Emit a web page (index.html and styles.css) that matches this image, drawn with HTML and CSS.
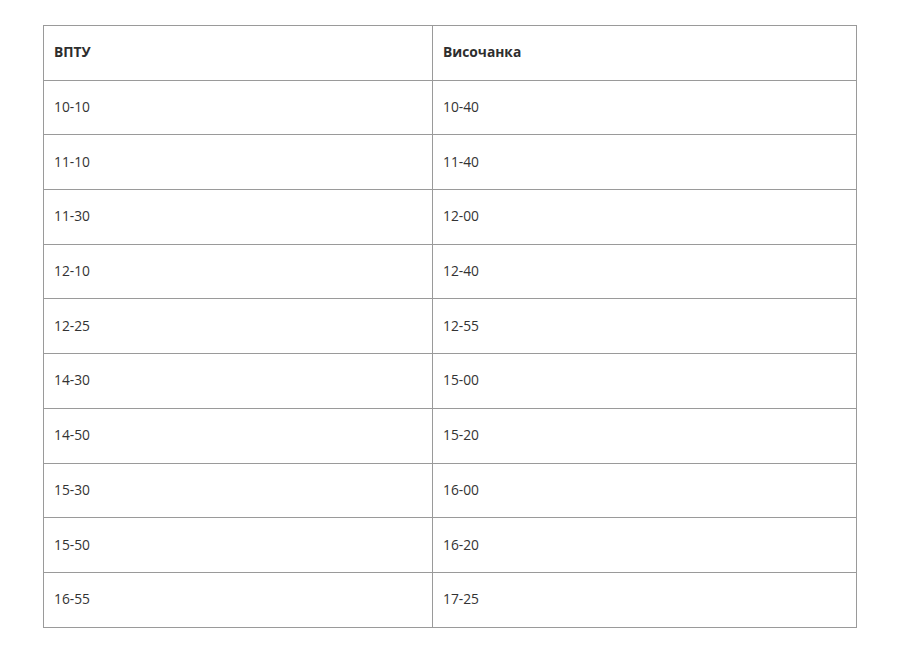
FILE: index.html
```html
<!DOCTYPE html>
<html lang="uk">
<head>
<meta charset="utf-8">
<link rel="stylesheet" href="styles.css">
</head>
<body>
<div class="wrap">
<table class="schedule">
<colgroup><col class="c1"><col class="c2"></colgroup>
<thead>
<tr><th>ВПТУ</th><th>Височанка</th></tr>
</thead>
<tbody>
<tr><td>10-10</td><td>10-40</td></tr>
<tr><td>11-10</td><td>11-40</td></tr>
<tr><td>11-30</td><td>12-00</td></tr>
<tr><td>12-10</td><td>12-40</td></tr>
<tr><td>12-25</td><td>12-55</td></tr>
<tr><td>14-30</td><td>15-00</td></tr>
<tr><td>14-50</td><td>15-20</td></tr>
<tr><td>15-30</td><td>16-00</td></tr>
<tr><td>15-50</td><td>16-20</td></tr>
<tr><td>16-55</td><td>17-25</td></tr>
</tbody>
</table>
</div>
</body>
</html>
```
FILE: styles.css
```css
html, body {
  margin: 0;
  padding: 0;
  background: #fff;
}
.wrap {
  padding: 25px 0 0 43px;
}
.schedule {
  border-collapse: collapse;
  width: 814px;
  table-layout: fixed;
  font-family: "Open Sans", "Liberation Sans", sans-serif;
  font-size: 13.8px;
  color: #333;
}
.c1 { width: 389px; }
.schedule th,
.schedule td {
  border: 1px solid #9a9a9a;
  text-align: left;
  padding: 0 10px 2px;
  height: 51.7px;
  vertical-align: middle;
}
.schedule th {
  font-weight: 700;
  color: #2e2e2e;
}
```
